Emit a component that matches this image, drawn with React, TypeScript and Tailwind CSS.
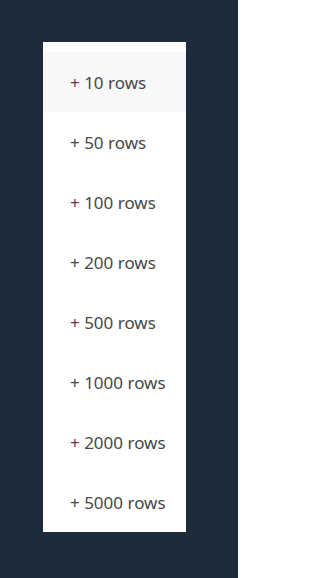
import React from "react";

const items = ["+ 10 rows", "+ 50 rows", "+ 100 rows", "+ 200 rows", "+ 500 rows", "+ 1000 rows", "+ 2000 rows", "+ 5000 rows"];

export default function App() {
  return (
    <div className="w-[238px] h-[578px] bg-[#1e2b3a] pt-[42px] pl-[43px]" style={{ fontFamily: '"Noto Sans", "Open Sans", sans-serif' }}>
      <div className="w-[143px] bg-white pt-[10px]">
        {items.map((t, i) => (
          <div
            key={t}
            className={`h-[60px] flex items-center pl-[27px] pt-[2px] text-[17px] text-[#474747] ${i === 0 ? "bg-[#f8f8f8]" : ""}`}
          >
            {t}
          </div>
        ))}
      </div>
    </div>
  );
}
